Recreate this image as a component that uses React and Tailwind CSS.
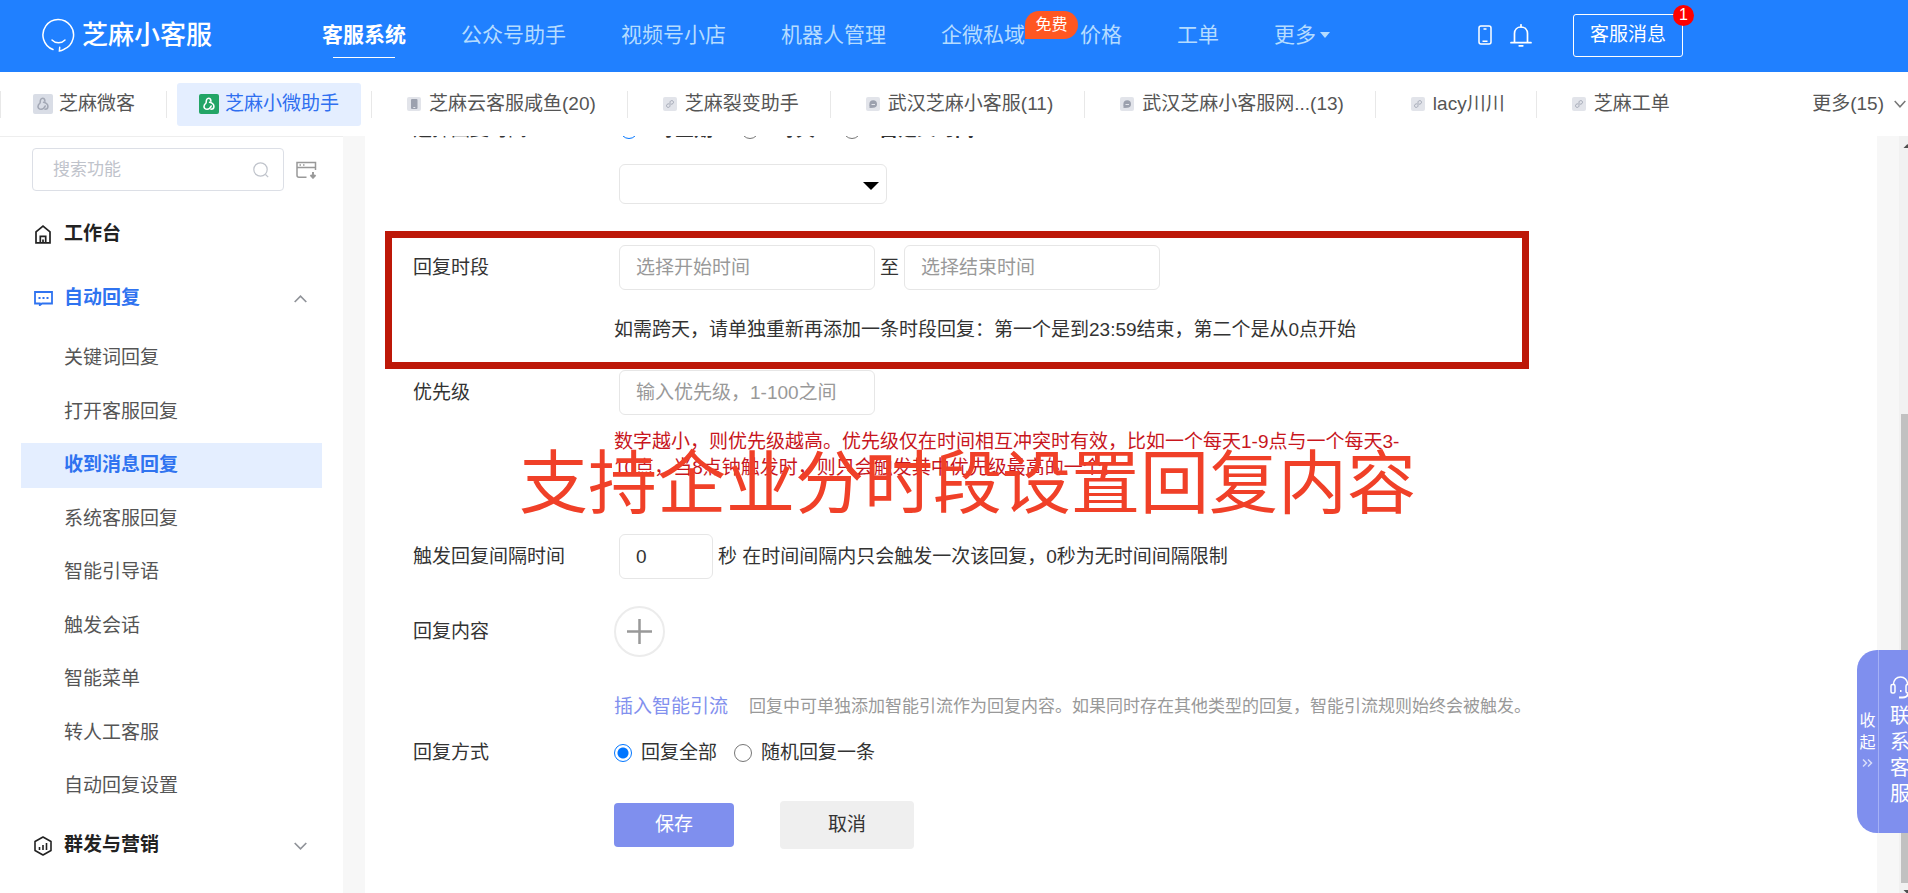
import React, { useState } from 'react';

const navItems = ['客服系统', '公众号助手', '视频号小店', '机器人管理', '企微私域', '价格', '工单', '更多'];

const tabs = [
  { name: '芝麻微客', icon: 'swirl' },
  { name: '芝麻小微助手', icon: 'swirl', active: true },
  { name: '芝麻云客服咸鱼(20)', icon: 'phone' },
  { name: '芝麻裂变助手', icon: 'mini' },
  { name: '武汉芝麻小客服(11)', icon: 'chat' },
  { name: '武汉芝麻小客服网...(13)', icon: 'chat' },
  { name: 'lacy川川', icon: 'mini' },
  { name: '芝麻工单', icon: 'mini' },
];

const menuItems = [
  '关键词回复',
  '打开客服回复',
  '收到消息回复',
  '系统客服回复',
  '智能引导语',
  '触发会话',
  '智能菜单',
  '转人工客服',
  '自动回复设置',
];

const inputClass =
  'h-[45px] rounded-md border border-[#e6e6e6] bg-white px-4 text-[#333] placeholder:text-[#999] outline-none';

const radioClass =
  'size-[18px] shrink-0 appearance-none rounded-full border border-[#767676] bg-white checked:border-[#0075ff] checked:bg-[radial-gradient(circle,#0075ff_5px,white_6px)]';

const TabIcon = ({ type, active }) => {
  if (type === 'swirl') {
    return (
      <svg className="size-5 shrink-0" viewBox="0 0 20 20" fill="none">
        <rect width="20" height="20" rx="2" fill={active ? '#23a566' : '#d9dde6'} />
        <g stroke={active ? '#fff' : '#a3a8b5'} strokeWidth="1.6" strokeLinecap="round">
          <path d="M7.200 8.200C7.200 6 8 4.300 9.600 4.300c1.700 0 2.300 1.500 2.300 3" />
          <path d="M10.600 8.200c2.300.6 4.300 2.300 4.300 4.300 0 1.700-1.300 2.700-2.900 2.700" />
          <path d="M12.200 12c-.8 2-2.300 3.300-4.100 3.300-1.900 0-3.100-1.200-3.100-2.800 0-1.500.9-2.600 2-3.500" />
        </g>
      </svg>
    );
  }
  return (
    <svg className="size-[14px] shrink-0" viewBox="0 0 14 14" fill="none">
      <rect width="14" height="14" rx="2" fill="#e2e4ea" />
      {type === 'phone' && (
        <>
          <rect x="4" y="2" width="6.500" height="10" rx="1" fill="#9ca1ae" />
          <rect x="6.300" y="10" width="2" height="1" fill="#e2e4ea" />
        </>
      )}
      {type === 'chat' && (
        <>
          <circle cx="7.200" cy="7" r="3.800" fill="#9ca1ae" />
          <path d="M3.500 11V7.500L7 10.800z" fill="#9ca1ae" />
          <path d="M5.500 7.500h3.500" stroke="#e2e4ea" strokeWidth="1" />
        </>
      )}
      {type === 'mini' && (
        <path
          d="M5.500 6.800c-1.200.1-2 .9-2 1.900s.7 1.700 1.700 1.700S7 9.700 7 8.700V5.300c0-1 .8-1.700 1.800-1.700s1.700.7 1.700 1.700-.8 1.800-2 1.900"
          stroke="#a3a8b5"
          strokeWidth="1"
          strokeLinecap="round"
        />
      )}
    </svg>
  );
};

const Header = () => (
  <header className="flex h-[72px] shrink-0 items-center bg-[#2080ff] pb-[2px] pl-[42px] text-white">
    <a href="#home" className="flex w-[280px] shrink-0 items-center gap-[7px]">
      <svg className="h-[34px] w-[33px]" viewBox="0 0 33 34" fill="none" stroke="currentColor">
        <path
          d="M11 31.500A15.300 15.500 0 1 1 22 31.300c-1.500.9-3 1.500-4.600 1.600l.3-3.600"
          strokeWidth="1.500"
          strokeLinecap="round"
        />
        <path d="M10 22c3.500 3.700 9.500 3.700 13 0" strokeWidth="1.500" strokeLinecap="round" />
      </svg>
      <span className="text-[26px] leading-8 font-medium">芝麻小客服</span>
    </a>

    <nav className="flex items-center gap-[55px] text-[21px] leading-8 whitespace-nowrap text-[#b5dcff]">
      {navItems.map((item, index) => (
        <a
          key={item}
          href="#nav"
          className={index === 0 ? 'relative font-bold text-white' : 'relative flex items-center gap-1'}
        >
          {item}
          {index === 0 && <span className="absolute inset-x-[11px] -bottom-[7px] h-px bg-white" />}
          {item === '企微私域' && (
            <span className="absolute -top-2 left-full flex h-7 w-[53px] items-center justify-center rounded-[14px] rounded-bl-none bg-[#ff5722] text-base text-white">
              免费
            </span>
          )}
          {item === '更多' && (
            <span className="border-x-[5px] border-t-[6px] border-x-transparent border-t-[#b5dcff]" />
          )}
        </a>
      ))}
    </nav>

    <div className="ml-[148px] flex shrink-0 items-center">
      <button type="button" aria-label="手机端">
        <svg className="h-[20px] w-[14px]" viewBox="0 0 14 20" fill="none" stroke="currentColor" strokeWidth="1.500">
          <rect x="1" y="1" width="12" height="18" rx="2" />
          <path d="M5.500 4h3M4.500 16.200h5" />
        </svg>
      </button>
      <button type="button" aria-label="通知" className="ml-[18px]">
        <svg className="h-[23px] w-[22px]" viewBox="0 0 22 23" fill="none" stroke="currentColor" strokeWidth="1.700">
          <path d="M4.500 18.500V9.500C4.500 5.500 7.300 3 11 3s6.500 2.500 6.500 6.500v9" />
          <path d="M1 18.700h20M11 3V.8M9.200 21.800h3.600" strokeLinecap="round" />
        </svg>
      </button>
      <button type="button" className="relative ml-[41px] h-[43px] rounded-[3px] border border-white px-4 text-[19px]">
        客服消息
        <span className="absolute -top-[10px] -right-3 flex size-[21px] items-center justify-center rounded-full bg-[#ff0000] text-base leading-none">
          1
        </span>
      </button>
    </div>
  </header>
);

const TabBar = () => (
  <div className="flex h-16 shrink-0 items-center bg-white whitespace-nowrap text-[#555]">
    {tabs.map((tab) => {
      const big = tab.icon === 'swirl';
      return (
        <div key={tab.name} className="flex items-center">
          <span className="h-[27px] w-px bg-[#e8e8e8]" />
          <a
            href="#tab"
            className={
              tab.active
                ? 'mx-[10px] flex h-[43px] items-center gap-[6px] rounded-[3px] bg-[#e4eeff] px-[22px] text-[#2f6ff0]'
                : big
                  ? 'flex h-[43px] items-center gap-[6px] pr-[31px] pl-8'
                  : 'flex h-[43px] items-center gap-2 pr-[31px] pl-[35px]'
            }
          >
            <TabIcon type={tab.icon} active={tab.active} />
            {tab.name}
          </a>
        </div>
      );
    })}
    <button type="button" className="mr-[2px] ml-auto flex shrink-0 items-center gap-[10px]">
      更多(15)
      <svg className="h-[8px] w-3" viewBox="0 0 12 8" fill="none" stroke="#777" strokeWidth="1.500">
        <path d="M.700 1 6 6.800 11.300 1" />
      </svg>
    </button>
  </div>
);

const Sidebar = () => (
  <aside className="w-[343px] shrink-0 border-t border-[#eee] bg-white">
    <div className="flex items-center gap-3 pt-[11px] pl-8">
      <label className="flex h-[43px] w-[252px] items-center rounded-[4px] border border-[#dcdfe6] pr-[14px] pl-5">
        <input
          type="text"
          aria-label="搜索功能"
          placeholder="搜索功能"
          className="w-full min-w-0 text-[17px] outline-none placeholder:text-[#bfc3cb]"
        />
        <svg className="size-4 shrink-0" viewBox="0 0 16 16" fill="none" stroke="#bfc3cb" strokeWidth="1.200">
          <circle cx="7.500" cy="7.500" r="6.700" />
          <path d="m12.500 12.500 2.700 2.700" />
        </svg>
      </label>
      <button type="button" aria-label="收起菜单">
        <svg className="h-[18px] w-[21px]" viewBox="0 0 21 18" fill="none" stroke="#999" strokeWidth="1.500">
          <path d="M10.500 16.300H3a2 2 0 0 1-2-2V1.500h18.500v7.500M1 6.500h18.500" />
          <path d="M3.500 4h1.500M7 4h1.500" />
          <path d="M17 11v5.500M14.500 14l2.500 2.700 2.500-2.700" strokeWidth="1.900" />
        </svg>
      </button>
    </div>

    <a href="#workbench" className="mt-[21px] flex h-[45px] items-center gap-[13px] pl-[35px] font-bold text-[#222]">
      <svg className="h-[19px] w-4" viewBox="0 0 16 19" fill="none" stroke="currentColor" strokeWidth="1.700">
        <path d="M1 17.800V6.800L8 1.200l7 5.600v11z" />
        <path d="M5.300 17.500v-6.200h5.400v6.200M8 14.500v3" />
      </svg>
      工作台
    </a>

    <button
      type="button"
      className="mt-[19px] flex h-[45px] w-full items-center gap-[11px] pr-9 pl-[34px] font-bold text-[#2f73f0]"
    >
      <svg className="h-[15px] w-[19px]" viewBox="0 0 19 15" fill="none" stroke="currentColor" strokeWidth="1.800">
        <path d="M1 1h17v11.500H8l-2.200 1.700v-1.700H1z" />
        <path d="M4.500 7h2M8.500 7h2M12.500 7h2" strokeWidth="2" />
      </svg>
      自动回复
      <svg className="ml-auto h-2 w-[13px]" viewBox="0 0 13 8" fill="none" stroke="#909399" strokeWidth="1.700">
        <path d="M.700 7 6.500 1.200 12.300 7" />
      </svg>
    </button>

    <ul className="mt-[15px] flex min-h-[473px] flex-col justify-between text-[#555]">
      {menuItems.map((item) => (
        <li key={item}>
          <a
            href="#menu"
            className={
              item === '收到消息回复'
                ? 'mx-[21px] flex h-[45px] items-center bg-[#e4eeff] pl-[43px] font-bold text-[#2f73f0]'
                : 'mx-[21px] flex h-[45px] items-center pl-[43px]'
            }
          >
            {item}
          </a>
        </li>
      ))}
    </ul>

    <button
      type="button"
      className="mt-[14px] flex h-[45px] w-full items-center gap-3 pr-9 pl-[34px] font-bold text-[#222]"
    >
      <svg className="h-5 w-[18px]" viewBox="0 0 18 20" fill="none" stroke="currentColor" strokeWidth="1.600">
        <path d="M9 1l8 4.500v9L9 19l-8-4.500v-9z" strokeLinejoin="round" />
        <path d="M5.500 11v3M9 9v5M12.500 7v7" />
      </svg>
      群发与营销
      <svg className="ml-auto h-2 w-[13px]" viewBox="0 0 13 8" fill="none" stroke="#909399" strokeWidth="1.700">
        <path d="M.700 1 6.500 6.800 12.300 1" />
      </svg>
    </button>
  </aside>
);

const Row = ({ label, htmlFor, className, children }) => (
  <div className={`flex ${className}`}>
    {htmlFor ? (
      <label htmlFor={htmlFor} className="w-[201px] shrink-0">{label}</label>
    ) : (
      <span className="w-[201px] shrink-0">{label}</span>
    )}
    {children}
  </div>
);

const ReplyForm = () => {
  const [mode, setMode] = useState('all');
  const [cycle, setCycle] = useState('week');

  return (
    <form className="relative -mt-5 px-5 leading-[26px] text-[#333]">
      <Row label="选择回复时间" className="h-7 items-center pl-7">
        <div className="ml-[6px] flex items-center font-bold">
          <label className="flex items-center gap-[18px]">
            <input type="radio" name="cycle" checked={cycle === 'week'} onChange={() => setCycle('week')} className={radioClass} />
            每星期
          </label>
          <label className="ml-7 flex items-center gap-[18px]">
            <input type="radio" name="cycle" checked={cycle === 'day'} onChange={() => setCycle('day')} className={radioClass} />
            每天
          </label>
          <label className="ml-7 flex items-center gap-[18px]">
            <input type="radio" name="cycle" checked={cycle === 'custom'} onChange={() => setCycle('custom')} className={radioClass} />
            自定义时间
          </label>
        </div>
      </Row>

      <div className="mt-5 pl-[234px]">
        <div className="relative w-[268px]">
          <select aria-label="选择星期" className="block h-10 w-full appearance-none rounded-md border border-[#e6e6e6] bg-white">
            <option></option>
          </select>
          <span className="pointer-events-none absolute top-[18px] right-2 border-x-8 border-t-8 border-x-transparent border-t-black" />
        </div>
      </div>

      <div className="mt-[27px] max-w-[1144px] border-[7px] border-[#bd1808] pt-[7px] pb-[19px] pl-[21px]">
        <Row label="回复时段" htmlFor="start" className="items-center">
          <input id="start" type="text" placeholder="选择开始时间" className={`${inputClass} ml-[5px] w-[256px]`} />
          <span className="mx-[5px]">至</span>
          <input type="text" aria-label="结束时间" placeholder="选择结束时间" className={`${inputClass} w-[256px]`} />
        </Row>
        <p className="mt-[27px] pl-[201px]">如需跨天，请单独重新再添加一条时段回复：第一个是到23:59结束，第二个是从0点开始</p>
      </div>

      <Row label="优先级" htmlFor="priority" className="mt-px items-center pl-7">
        <input id="priority" type="text" placeholder="输入优先级，1-100之间" className={`${inputClass} ml-[5px] w-[256px]`} />
      </Row>
      <p className="mt-[14px] ml-[229px] max-w-[792px] text-[#c8161d]">
        数字越小，则优先级越高。优先级仅在时间相互冲突时有效，比如一个每天1-9点与一个每天3-10点，当8点钟触发时，则只会触发其中优先级最高的一个。
      </p>

      <Row label="触发回复间隔时间" htmlFor="interval" className="mt-[53px] items-center pl-7">
        <input id="interval" type="text" defaultValue="0" className={`${inputClass} mr-[5px] ml-[5px] w-[94px]`} />
        秒 在时间间隔内只会触发一次该回复，0秒为无时间间隔限制
      </Row>

      <Row label="回复内容" className="mt-[27px] items-center pl-7">
        <button type="button" aria-label="添加内容" className="flex size-[51px] items-center justify-center rounded-full border-2 border-[#ececec]">
          <svg className="size-[25px]" viewBox="0 0 25 25" stroke="#999" strokeWidth="2.500">
            <path d="M12.500 0v25M0 12.500h25" />
          </svg>
        </button>
      </Row>

      <div className="mt-[37px] flex items-center gap-[21px] pl-[229px]">
        <a href="#insert" className="text-[#8290ee]">插入智能引流</a>
        <span className="text-[17px] text-[#999]">
          回复中可单独添加智能引流作为回复内容。如果同时存在其他类型的回复，智能引流规则始终会被触发。
        </span>
      </div>

      <Row label="回复方式" className="mt-5 items-center pl-7">
        <label className="flex items-center gap-[9px]">
          <input type="radio" name="mode" checked={mode === 'all'} onChange={() => setMode('all')} className={radioClass} />
          回复全部
        </label>
        <label className="ml-[17px] flex items-center gap-[9px]">
          <input type="radio" name="mode" checked={mode === 'random'} onChange={() => setMode('random')} className={radioClass} />
          随机回复一条
        </label>
      </Row>

      <div className="mt-[35px] flex items-center gap-[46px] pl-[229px]">
        <button type="button" className="h-11 w-[120px] rounded-[4px] bg-[#7f8fee] text-white">保存</button>
        <button type="button" className="h-12 w-[134px] rounded-[4px] bg-[#efefef] text-[#333]">取消</button>
      </div>

      {/* Caption lying over the form */}
      <p className="pointer-events-none absolute top-[334px] left-[154px] text-[69px] leading-[70px] whitespace-nowrap text-[#f04028]">
        支持企业分时段设置回复内容
      </p>
    </form>
  );
};

const ContactPanel = () => (
  <div className="absolute top-[650px] right-0 flex h-[183px] w-[51px] overflow-hidden rounded-l-[20px] bg-[#7f8fee] text-white">
    <button type="button" className="flex w-[22px] shrink-0 flex-col items-center justify-center border-r border-[#a5b1f5] pb-[6px] text-base leading-[22px]">
      <span>收</span>
      <span>起</span>
      <svg className="mt-[5px] h-2 w-[11px] opacity-70" viewBox="0 0 11 8" fill="none" stroke="currentColor" strokeWidth="1.500">
        <path d="M1 .500 4.500 4 1 7.500M6 .500 9.500 4 6 7.500" />
      </svg>
    </button>
    <a href="#contact" className="ml-[11px] flex w-5 shrink-0 flex-col items-center pt-[26px] text-[20px] leading-[26px]">
      <svg className="mb-[4px] h-[23px] w-[21px] shrink-0" viewBox="0 0 21 23" fill="none" stroke="currentColor" strokeWidth="1.500">
        <path d="M3.500 8.500C3.500 4 6.500 1 10.500 1s7 3 7 7.500" />
        <rect x="1" y="8.500" width="4" height="8.500" rx="1.500" />
        <rect x="16" y="8.500" width="4" height="8.500" rx="1.500" />
        <path d="M18 17.500c0 2.300-2.500 4-5.500 4M9 21.500h3.500" strokeWidth="2" />
        <path d="M10 15h1.500" strokeWidth="2" />
      </svg>
      <span>联</span>
      <span>系</span>
      <span>客</span>
      <span>服</span>
    </a>
  </div>
);

const ScrollBar = () => (
  <div className="flex w-[9px] shrink-0 flex-col overflow-hidden bg-[#f1f1f1] pl-[2px]">
    <svg className="h-[17px] w-[13px] shrink-0" viewBox="0 0 13 17" fill="#505050">
      <path d="M2.500 12 6.500 8l4 4z" />
    </svg>
    <div className="mt-auto h-[62%] w-[13px] shrink-0 bg-[#c1c1c1]" />
    <svg className="h-[10px] w-[13px] shrink-0" viewBox="0 0 13 10" fill="#505050">
      <path d="M2.500 7h8l-4 4z" />
    </svg>
  </div>
);

const App = () => (
  <div className="relative flex h-screen flex-col overflow-hidden bg-white font-['Liberation_Sans','Noto_Sans_CJK_SC',sans-serif] text-[19px]">
    <Header />
    <TabBar />
    <div className="flex min-h-0 flex-1">
      <Sidebar />
      <div className="flex min-w-0 flex-1 bg-[#f7f7f7] pl-[22px]">
        <main className="min-w-0 flex-1 overflow-hidden bg-white">
          <ReplyForm />
        </main>
        <div className="w-[22px] shrink-0" />
      </div>
      <ScrollBar />
    </div>
    <ContactPanel />
  </div>
);

export default App;
